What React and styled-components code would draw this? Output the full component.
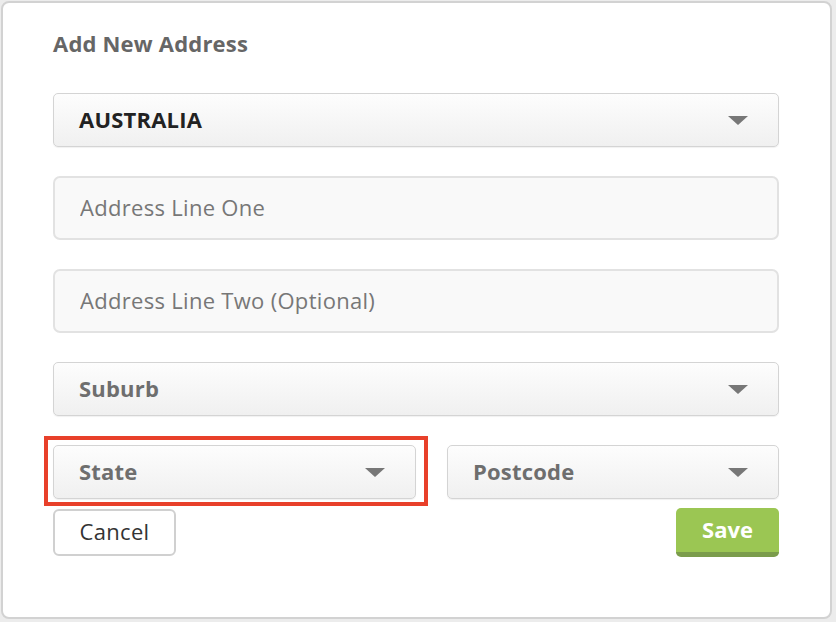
import React from 'react';
import styled, { createGlobalStyle } from 'styled-components';

const GlobalStyle = createGlobalStyle`
    html, body {
        margin: 0;
        padding: 0;
        background: #ececec;
    }
    #root {
        padding: 1px 4px 3px 1px;
    }
`;

const StyledCard = styled.div`
    position: relative;
    box-sizing: border-box;
    height: 618px;
    background: #fff;
    border: 2px solid #d2d2d2;
    border-radius: 8px;
    padding: 26px 51px 0 50px;
    font-family: "Open Sans", "Helvetica Neue", Arial, sans-serif;
`;
const StyledTitle = styled.h2`
    margin: 0 0 36px;
    color: #666;
    font-size: 22px;
    font-weight: 700;
    line-height: 28px;
    letter-spacing: 0.2px;
`;
const StyledFields = styled.div`
    display: flex;
    flex-direction: column;
    gap: 29px;
`;
const StyledSelect = styled.div`
    box-sizing: border-box;
    display: flex;
    align-items: center;
    justify-content: space-between;
    height: 54px;
    padding: 0 30px 3px 25px;
    background: linear-gradient(#fdfdfd, #f0f0f0);
    border: 1px solid #d4d4d4;
    border-radius: 5px;
    box-shadow: 0 1px 1px rgba(0, 0, 0, 0.06);
    color: ${props => (props.filled ? '#222' : '#6e6e6e')};
    font-size: 22px;
    font-weight: 700;
    letter-spacing: 0.2px;
    text-transform: ${props => (props.filled ? 'uppercase' : 'none')};
`;
const StyledArrow = styled.span`
    width: 0;
    height: 0;
    margin-top: 3px;
    border-left: 10px solid transparent;
    border-right: 10px solid transparent;
    border-top: 9px solid #777;
`;
const StyledInput = styled.input`
    box-sizing: border-box;
    height: 64px;
    width: 100%;
    padding: 0 25px 3px;
    background: #f9f9f9;
    border: 2px solid #e2e2e2;
    border-radius: 7px;
    font-family: inherit;
    font-size: 22px;
    letter-spacing: 0.3px;
    color: #333;
    outline: none;

    &::placeholder {
        color: #777;
    }
`;
const StyledRow = styled.div`
    display: grid;
    grid-template-columns: 363px 1fr;
    gap: 31px;
`;
const StyledHighlight = styled.div`
    position: relative;

    &::after {
        content: '';
        position: absolute;
        left: -9px;
        top: -9px;
        right: -12px;
        bottom: -7px;
        border: 4px solid #e8402a;
        pointer-events: none;
    }
`;
const StyledActions = styled.div`
    display: flex;
    justify-content: space-between;
    align-items: flex-start;
    margin-top: 9px;
`;
const StyledCancel = styled.button`
    box-sizing: border-box;
    width: 123px;
    height: 47px;
    margin-top: 1px;
    padding: 0 0 3px;
    background: #fff;
    border: 2px solid #d0d0d0;
    border-radius: 6px;
    color: #333;
    font-family: inherit;
    font-size: 22px;
    letter-spacing: 0.3px;
`;
const StyledSave = styled.button`
    box-sizing: border-box;
    width: 103px;
    height: 49px;
    padding: 0 0 3px;
    background: #9bc653;
    border: none;
    border-bottom: 5px solid #7b9c4c;
    border-radius: 5px;
    color: #fff;
    font-family: inherit;
    font-size: 22px;
    font-weight: 700;
`;

const App = () => (
    <>
        <GlobalStyle />
        <StyledCard>
            <StyledTitle>Add New Address</StyledTitle>
            <StyledFields>
                <StyledSelect filled>
                    Australia
                    <StyledArrow />
                </StyledSelect>
                <StyledInput placeholder="Address Line One" />
                <StyledInput placeholder="Address Line Two (Optional)" />
                <StyledSelect>
                    Suburb
                    <StyledArrow />
                </StyledSelect>
                <StyledRow>
                    <StyledHighlight>
                        <StyledSelect>
                            State
                            <StyledArrow />
                        </StyledSelect>
                    </StyledHighlight>
                    <StyledSelect>
                        Postcode
                        <StyledArrow />
                    </StyledSelect>
                </StyledRow>
            </StyledFields>
            <StyledActions>
                <StyledCancel>Cancel</StyledCancel>
                <StyledSave>Save</StyledSave>
            </StyledActions>
        </StyledCard>
    </>
);

export default App;
